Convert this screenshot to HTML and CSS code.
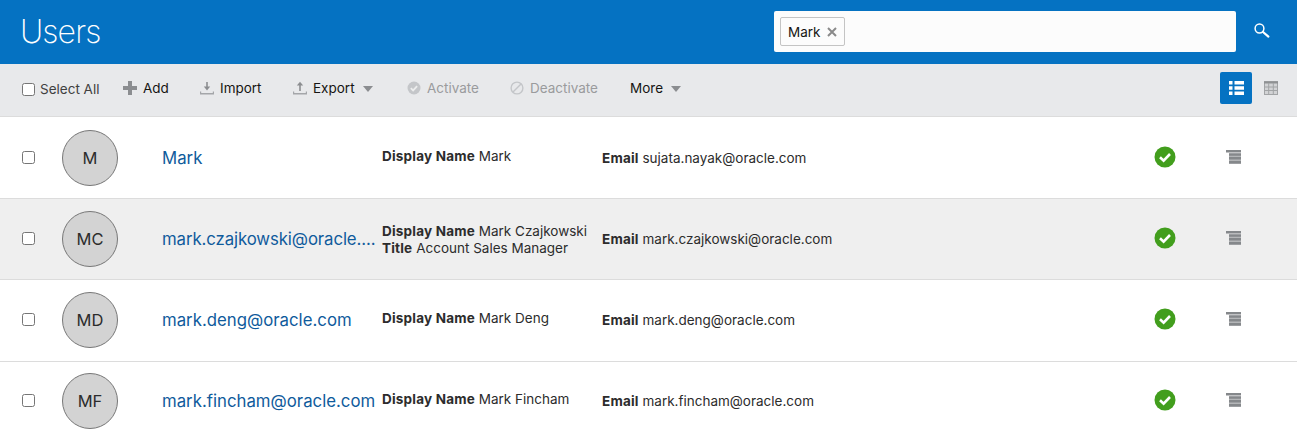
FILE: index.html
```html
<!DOCTYPE html>
<html lang="en">
<head>
<meta charset="utf-8">
<title>Users</title>
<link rel="stylesheet" href="styles.css">
</head>
<body>
<header class="header">
  <h1 class="title">Users</h1>
  <div class="search">
    <span class="chip">Mark <svg class="chip-x" viewBox="0 0 10 10" width="10" height="10"><path d="M1 1l8 8M9 1l-8 8" stroke="#8a8a8a" stroke-width="2"/></svg></span>
  </div>
  <button class="search-btn" aria-label="Search">
    <svg viewBox="0 0 17 17" width="17" height="17"><circle cx="6.5" cy="6.5" r="4.4" fill="none" stroke="#fff" stroke-width="1.5"/><path d="M10 10l5.4 4.6" stroke="#fff" stroke-width="2.2" stroke-linecap="round"/></svg>
  </button>
</header>
<div class="toolbar">
  <label class="select-all"><span class="box"></span>Select All</label>
  <span class="tool tool-add"><svg viewBox="0 0 14 14" width="14" height="14"><path d="M7 0v14M0 7h14" stroke="#8b8d90" stroke-width="4"/></svg>Add</span>
  <span class="tool tool-import"><svg viewBox="0 0 14 14" width="14" height="14"><path d="M7 1v6" stroke="#8b8d90" stroke-width="1.6"/><path d="M3.8 5.6h6.4L7 9.4z" fill="#8b8d90"/><path d="M.5 10.4v2.3h13v-2.3" fill="none" stroke="#a4a6a9" stroke-width="1.4"/></svg>Import</span>
  <span class="tool tool-export"><svg viewBox="0 0 14 14" width="14" height="14"><path d="M7 4v6" stroke="#8b8d90" stroke-width="1.6"/><path d="M3.8 4.6h6.4L7 .8z" fill="#8b8d90"/><path d="M.5 10.4v2.3h13v-2.3" fill="none" stroke="#a4a6a9" stroke-width="1.4"/></svg>Export<i class="caret"></i></span>
  <span class="tool tool-off tool-activate"><svg viewBox="0 0 14 14" width="14" height="14"><circle cx="7" cy="7" r="6.5" fill="#c4c6c9"/><path d="M3.8 7.2l2.3 2.2 4-4.2" fill="none" stroke="#eceded" stroke-width="1.8"/></svg>Activate</span>
  <span class="tool tool-off tool-deactivate"><svg viewBox="0 0 14 14" width="14" height="14"><circle cx="7" cy="7" r="5.9" fill="none" stroke="#c4c6c9" stroke-width="1.4"/><path d="M3 11L11 3" stroke="#c4c6c9" stroke-width="1.4"/></svg>Deactivate</span>
  <span class="tool tool-more">More<i class="caret"></i></span>
  <span class="view-btn">
    <svg viewBox="0 0 15 14" width="15" height="14"><path fill="#fff" d="M0 0h3.5v3.5H0zM5.5 0H15v3.5H5.5zM0 5.2h3.5v3.6H0zM5.5 5.2H15v3.6H5.5zM0 10.5h3.5V14H0zM5.5 10.5H15V14H5.5z"/></svg>
  </span>
  <span class="grid-btn">
    <svg viewBox="0 0 14 14" width="14" height="14"><rect x=".5" y=".5" width="13" height="13" fill="#d2d3d5" stroke="#a2a4a6"/><path d="M0 1.5h14" stroke="#8f9193" stroke-width="2"/><path d="M0 6h14M0 9.5h14M4.7 2v12M9.3 2v12" stroke="#a2a4a6"/></svg>
  </span>
</div>
<main class="list">
  <article class="row row-first">
    <span class="box"></span>
    <span class="avatar">M</span>
    <a class="name">Mark</a>
    <div class="meta"><div><b>Display Name</b> Mark</div></div>
    <div class="email"><b>Email</b> sujata.nayak@oracle.com</div>
    <svg class="ok" viewBox="0 0 22 22" width="22" height="22"><circle cx="11" cy="11" r="10.5" fill="#429e1d"/><path d="M6 11.2l3.6 3.4 6.4-6.6" fill="none" stroke="#fff" stroke-width="2.6"/></svg>
    <svg class="menu" viewBox="0 0 15 14" width="15" height="14"><path fill="#b4b6b8" d="M3 3h12v11H3z"/><path fill="#85888b" d="M0 0h15v2.4H0zM3 3.6h12v2.2H3zM3 7h12v2.4H3zM3 11h12v2.4H3z"/></svg>
  </article>
  <article class="row row-alt">
    <span class="box"></span>
    <span class="avatar">MC</span>
    <a class="name">mark.czajkowski@oracle....</a>
    <div class="meta"><div><b>Display Name</b> Mark Czajkowski</div><div><b>Title</b> Account Sales Manager</div></div>
    <div class="email"><b>Email</b> mark.czajkowski@oracle.com</div>
    <svg class="ok" viewBox="0 0 22 22" width="22" height="22"><circle cx="11" cy="11" r="10.5" fill="#429e1d"/><path d="M6 11.2l3.6 3.4 6.4-6.6" fill="none" stroke="#fff" stroke-width="2.6"/></svg>
    <svg class="menu" viewBox="0 0 15 14" width="15" height="14"><path fill="#b4b6b8" d="M3 3h12v11H3z"/><path fill="#85888b" d="M0 0h15v2.4H0zM3 3.6h12v2.2H3zM3 7h12v2.4H3zM3 11h12v2.4H3z"/></svg>
  </article>
  <article class="row row-third">
    <span class="box"></span>
    <span class="avatar">MD</span>
    <a class="name">mark.deng@oracle.com</a>
    <div class="meta"><div><b>Display Name</b> Mark Deng</div></div>
    <div class="email"><b>Email</b> mark.deng@oracle.com</div>
    <svg class="ok" viewBox="0 0 22 22" width="22" height="22"><circle cx="11" cy="11" r="10.5" fill="#429e1d"/><path d="M6 11.2l3.6 3.4 6.4-6.6" fill="none" stroke="#fff" stroke-width="2.6"/></svg>
    <svg class="menu" viewBox="0 0 15 14" width="15" height="14"><path fill="#b4b6b8" d="M3 3h12v11H3z"/><path fill="#85888b" d="M0 0h15v2.4H0zM3 3.6h12v2.2H3zM3 7h12v2.4H3zM3 11h12v2.4H3z"/></svg>
  </article>
  <article class="row row-last">
    <span class="box"></span>
    <span class="avatar">MF</span>
    <a class="name">mark.fincham@oracle.com</a>
    <div class="meta"><div><b>Display Name</b> Mark Fincham</div></div>
    <div class="email"><b>Email</b> mark.fincham@oracle.com</div>
    <svg class="ok" viewBox="0 0 22 22" width="22" height="22"><circle cx="11" cy="11" r="10.5" fill="#429e1d"/><path d="M6 11.2l3.6 3.4 6.4-6.6" fill="none" stroke="#fff" stroke-width="2.6"/></svg>
    <svg class="menu" viewBox="0 0 15 14" width="15" height="14"><path fill="#b4b6b8" d="M3 3h12v11H3z"/><path fill="#85888b" d="M0 0h15v2.4H0zM3 3.6h12v2.2H3zM3 7h12v2.4H3zM3 11h12v2.4H3z"/></svg>
  </article>
</main>
</body>
</html>
```
FILE: styles.css
```css
* { box-sizing: border-box; }
html, body { margin: 0; height: 441px; overflow: hidden; background: #fff; }
body { font-family: Inter, "Liberation Sans", sans-serif; font-size: 13px; color: #2c2c2c; }

.header { height: 64px; background: #0572c2; display: flex; align-items: center; padding-left: 20px; }
.title { margin: 0 0 1px; font-size: 32px; font-weight: 200; letter-spacing: -0.9px; color: #fff; width: 754px; line-height: 40px; }
.search { width: 462px; height: 41px; margin-top: -1px; background: #fcfcfc; border-radius: 2px; display: flex; align-items: center; padding-left: 6px; }
.chip { height: 29px; width: 65px; border: 1px solid #c4c4c4; border-radius: 2px; display: flex; align-items: center; justify-content: space-between; padding: 0 7px 0 7px; font-size: 13.5px; color: #161513; }
.search-btn { border: 0; padding: 0; background: none; margin-left: 17px; margin-top: -3px; width: 17px; height: 17px; display: block; }
.search-btn svg { display: block; }

.toolbar { height: 53px; background: #e8e9eb; border-bottom: 1px solid #dcdcdc; display: flex; align-items: center; padding: 0 0 4px 22px; font-size: 13.5px; }
.box { display: block; width: 13px; height: 13px; flex: none; background: #fff; border: 1px solid #767676; border-radius: 2.5px; }
.select-all { display: flex; align-items: center; gap: 5px; color: #404040; width: 101px; margin-top: 2px; white-space: nowrap; }
.tool { display: flex; align-items: center; gap: 6px; color: #161513; white-space: nowrap; }
.tool svg { flex: none; }
.tool-add { width: 77px; }
.tool-import { width: 93px; }
.tool-export { width: 114px; }
.tool-activate { width: 103px; }
.tool-deactivate { width: 120px; }
.tool-more { width: 590px; }
.tool-off { color: #9a9b9d; }
.caret { display: block; width: 0; height: 0; margin-left: 2px; border: 5.5px solid transparent; border-top: 6px solid #8b8d90; border-bottom: 0; margin-top: 1px; }
.view-btn { width: 32px; height: 32px; background: #0572c2; border-radius: 2px; display: flex; align-items: center; justify-content: center; }
.grid-btn { margin-left: 12px; display: flex; }

.row { height: 81.6px; display: grid; grid-template-columns: 40px 100px 220px 220px 1fr 22px 65px; align-items: center; padding: 0 56px 0 22px; border-bottom: 1px solid #dcdcdc; }
.row-first { padding-top: 1px; }
.row-alt { background: #efefef; }
.row-third { padding-bottom: 1px; }
.row-last { border-bottom: 0; height: 78.4px; }
.row .box { margin-top: -1px; }
.avatar { width: 56px; height: 56px; border-radius: 50%; background: #d3d3d3; border: 1px solid #777; display: flex; align-items: center; justify-content: center; font-size: 16.5px; color: #2c2c2c; }
.name { color: #0f5b9c; font-size: 16.8px; white-space: nowrap; }
.row-alt .name { letter-spacing: -0.1px; }
.meta, .email { font-size: 13.5px; line-height: 17px; white-space: nowrap; }
.meta { margin-top: -3px; }
.row-alt .meta { margin-top: 2px; }
.email { margin-top: 1px; }
.meta b, .email b { font-weight: 700; letter-spacing: 0.2px; }
.ok { margin-top: -1px; }
.menu { justify-self: end; margin-top: -1.5px; }
```
